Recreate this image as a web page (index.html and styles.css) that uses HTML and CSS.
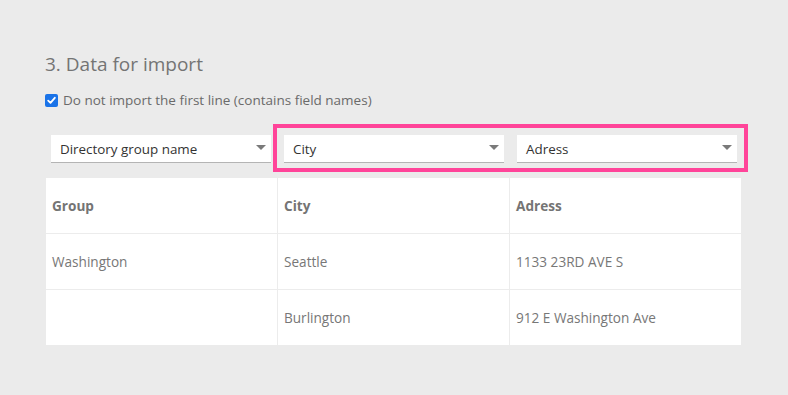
FILE: index.html
```html
<!DOCTYPE html>
<html>
<head>
<meta charset="utf-8">
<link rel="stylesheet" href="styles.css">
</head>
<body>
<div class="page">
  <h2 class="title">3. Data for import</h2>
  <label class="check">
    <span class="box"><svg width="9" height="9" viewBox="0 0 9 9"><path d="M1.2 4.6 L3.5 6.9 L7.8 1.8" fill="none" stroke="#fff" stroke-width="1.8" stroke-linecap="round" stroke-linejoin="round"/></svg></span>
    <span>Do not import the first line (contains field names)</span>
  </label>
  <div class="selects">
    <div class="select"><span>Directory group name</span><span class="arrow"></span></div>
    <div class="select"><span>City</span><span class="arrow"></span></div>
    <div class="select"><span>Adress</span><span class="arrow"></span></div>
    <div class="highlight"></div>
  </div>
  <div class="table">
    <div class="cell head">Group</div>
    <div class="cell head">City</div>
    <div class="cell head">Adress</div>
    <div class="cell">Washington</div>
    <div class="cell">Seattle</div>
    <div class="cell">1133 23RD AVE S</div>
    <div class="cell"></div>
    <div class="cell">Burlington</div>
    <div class="cell">912 E Washington Ave</div>
  </div>
</div>
</body>
</html>
```

FILE: styles.css
```css
html, body {
  margin: 0;
  padding: 0;
  background: #ebebeb;
}
body {
  font-family: "Open Sans", "Noto Sans", sans-serif;
  width: 788px;
  height: 395px;
  overflow: hidden;
}
.page {
  padding: 49px 0 0 45px;
  width: 697px;
}
.title {
  margin: 0;
  font-weight: 400;
  font-size: 19px;
  line-height: 30px;
  color: #747474;
}
.check {
  display: flex;
  align-items: center;
  gap: 5px;
  margin-top: 12px;
  font-size: 13.5px;
  line-height: 18px;
  color: #6a6a6a;
}
.box {
  width: 13px;
  height: 13px;
  border-radius: 2px;
  background: #1a73e8;
  display: flex;
  align-items: center;
  justify-content: center;
}
.selects {
  position: relative;
  display: grid;
  grid-template-columns: repeat(3, 1fr);
  gap: 13px;
  padding: 0 5px 0 6px;
  margin-top: 26px;
}
.select {
  height: 27px;
  background: #fff;
  border-bottom: 1px solid #b4b4b4;
  display: flex;
  align-items: center;
  justify-content: space-between;
  padding: 0 5px 0 9px;
  font-size: 13.4px;
  color: #333;
}
.arrow {
  width: 0;
  height: 0;
  border-left: 5px solid transparent;
  border-right: 5px solid transparent;
  border-top: 5px solid #7a7a7a;
  margin-top: -2px;
}
.highlight {
  position: absolute;
  left: 228px;
  top: -11px;
  width: 467px;
  height: 40px;
  border: 4px solid #ff4499;
  pointer-events: none;
}
.table {
  margin-top: 15px;
  margin-left: 1px;
  display: grid;
  grid-template-columns: 231px 232px 232px;
  background: #fff;
  width: 695px;
}
.cell {
  height: 55px;
  display: flex;
  align-items: center;
  padding: 0 6px;
  font-size: 13.6px;
  color: #777;
  border-top: 1px solid #ececec;
  border-left: 1px solid #ececec;
}
.cell:nth-child(3n+1) {
  border-left: none;
}
.cell:nth-child(-n+3) {
  border-top: none;
}
.head {
  font-weight: 700;
  color: #747474;
}
```
